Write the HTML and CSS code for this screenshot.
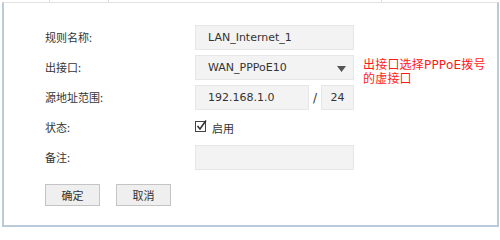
FILE: index.html
```html
<!DOCTYPE html>
<html lang="zh-CN">
<head>
<meta charset="utf-8">
<title>规则设置</title>
<link rel="stylesheet" href="styles.css">
</head>
<body>
<div class="tabs">
  <span class="tab t1"></span>
  <span class="tab t2"></span>
  <span class="tab t3"></span>
  <span class="tab t4"></span>
</div>
<div class="panel">
  <div class="form">
    <div class="label">规则名称:</div>
    <div class="field"><div class="input">LAN_Internet_1</div></div>
    <div class="spacer"></div>

    <div class="label">出接口:</div>
    <div class="field">
      <div class="input select">WAN_PPPoE10
        <svg class="arrow" width="9" height="6" viewBox="0 0 9 6"><polygon points="0,0 9,0 4.5,6" fill="#555"/></svg>
      </div>
    </div>
    <div class="note">出接口选择PPPoE拨号<br>的虚接口</div>

    <div class="label">源地址范围:</div>
    <div class="field ip">
      <div class="input addr">192.168.1.0</div>
      <span class="slash">/</span>
      <div class="input mask">24</div>
    </div>
    <div class="spacer"></div>

    <div class="label">状态:</div>
    <div class="field check">
      <svg class="box" width="14" height="14" viewBox="0 0 14 14">
        <rect x="0.5" y="2.5" width="10" height="10" fill="#fff" stroke="#444" stroke-width="1"/>
        <polyline points="2.5,7 5,10 11,1.5" fill="none" stroke="#333" stroke-width="1.6"/>
      </svg>
      <span class="check-text">启用</span>
    </div>
    <div class="spacer"></div>

    <div class="label">备注:</div>
    <div class="field"><div class="input"></div></div>
    <div class="spacer"></div>
  </div>
  <div class="buttons">
    <button class="btn">确定</button>
    <button class="btn">取消</button>
  </div>
</div>
</body>
</html>
```

FILE: styles.css
```css
html, body {
  margin: 0;
  padding: 0;
  background: #ffffff;
}
body {
  width: 500px;
  height: 228px;
  overflow: hidden;
  font-family: "DejaVu Sans", "Noto Sans CJK SC", sans-serif;
  color: #333;
}
.tabs {
  height: 2px;
  display: flex;
  margin-left: 4px;
  margin-right: 3px;
}
.tab {
  border-right: 1px solid #dcdcdc;
}
.t1 { width: 45px; }
.t2 { width: 58px; }
.t3 { width: 272px; }
.t4 { flex: 1; border-right: none; }
.panel {
  box-sizing: border-box;
  margin-left: 2px;
  width: 497px;
  height: 225px;
  border-top: 1px solid #e2e2e2;
  border-left: 2px solid #b9cadb;
  border-right: 2px solid #b9cadb;
  border-bottom: 2px solid #b9cadb;
  padding: 22px 0 0 41px;
}
.form {
  display: grid;
  grid-template-columns: 150px 159px auto;
  grid-auto-rows: 25px;
  row-gap: 5px;
}
.label {
  font-family: "Noto Sans CJK SC", sans-serif;
  font-size: 11px;
  line-height: 25px;
  color: #333;
}
.field {
  display: flex;
  align-items: center;
}
.input {
  box-sizing: border-box;
  width: 159px;
  height: 25px;
  background: #f3f3f3;
  border: 1px solid #e6e6e6;
  padding-left: 12px;
  font-size: 11px;
  line-height: 23px;
  color: #333;
  position: relative;
}
.select .arrow {
  position: absolute;
  right: 7px;
  top: 10px;
}
.ip .addr {
  width: 114px;
}
.slash {
  width: 12px;
  text-align: center;
  font-size: 12px;
  color: #333;
}
.ip .mask {
  width: 33px;
  padding-left: 0;
  text-align: center;
}
.check .box {
  margin-top: -4px;
}
.check-text {
  font-family: "Noto Sans CJK SC", sans-serif;
  font-size: 11px;
  margin-left: 3px;
}
.note {
  font-family: "DejaVu Sans", "Noto Sans CJK SC", sans-serif;
  font-size: 12px;
  line-height: 14px;
  color: #ff1a1a;
  margin-left: 9px;
  margin-top: 3px;
  white-space: nowrap;
  letter-spacing: 0.2px;
}
.buttons {
  display: flex;
  gap: 16px;
  margin-top: 14px;
}
.btn {
  box-sizing: border-box;
  width: 55px;
  height: 22px;
  background: #efefef;
  border: 1px solid #c4c4c4;
  border-radius: 0;
  font-family: "Noto Sans CJK SC", sans-serif;
  font-size: 11px;
  color: #333;
  padding: 0;
}
```
